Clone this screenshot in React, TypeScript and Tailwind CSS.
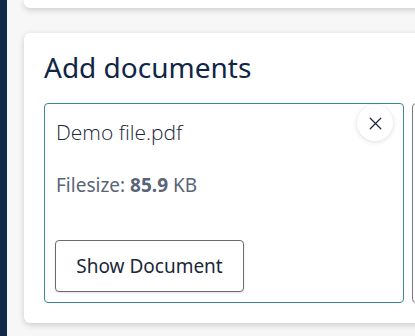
import { X } from 'lucide-react'

interface DocFile {
  name: string
  sizeKb: number
}

const files: DocFile[] = [{ name: 'Demo file.pdf', sizeKb: 85.9 }]

function DocumentCard({ file }: { file: DocFile }) {
  return (
    <div className="relative flex h-[200px] w-[360px] shrink-0 flex-col rounded-[4px] border border-[#3d8796] bg-white px-[10px] pt-[14px] pb-[10px]">
      <button className="absolute top-[1px] right-[10px] flex h-[36px] w-[36px] items-center justify-center rounded-full bg-white shadow-[0_1px_5px_rgba(0,0,0,0.14)]">
        <X size={21} strokeWidth={1.5} className="text-[#1d2a3b]" />
      </button>
      <p
        className="pl-[1px] text-[21px] leading-[28px] font-light text-[#1b2839]"
        style={{ fontFamily: '"Open Sans", "Noto Sans", sans-serif' }}
      >
        {file.name}
      </p>
      <p className="mt-[26px] pl-[1px] text-[19px] leading-[26px] text-[#5a6477]">
        Filesize: <span className="font-bold">{file.sizeKb}</span> KB
      </p>
      <div className="mt-auto">
        <button className="h-[52px] w-[189px] rounded-[4px] border border-[#6b6b6b] bg-white text-[19px] text-[#1b2839] shadow-[0_1px_2px_rgba(0,0,0,0.12)]">
          Show Document
        </button>
      </div>
    </div>
  )
}

export default function App() {
  return (
    <div
      className="flex h-[336px] w-[415px] overflow-hidden bg-[#f7f7f7]"
      style={{ fontFamily: '"Noto Sans", "Open Sans", sans-serif' }}
    >
      <div className="w-[7px] shrink-0 bg-[#11284a]" />
      <div className="flex-1 overflow-hidden pl-[17px]">
        {/* previous card, mostly scrolled out */}
        <div className="h-[8px] w-[420px] rounded-b-[6px] bg-white shadow-[0_2px_6px_rgba(0,0,0,0.18)]" />

        <div className="mt-[25px] w-[420px] rounded-[6px] bg-white px-[20px] pt-[16px] pb-[20px] shadow-[0_2px_6px_rgba(0,0,0,0.18)]">
          <h2 className="text-[28px] leading-[36px] text-[#0f2645]">Add documents</h2>
          <div className="mt-[18px] flex gap-[8px]">
            {files.map(f => (
              <DocumentCard key={f.name} file={f} />
            ))}
            {/* next card, off-screen */}
            <div className="h-[200px] w-[360px] shrink-0 rounded-[4px] border border-[#7a7a7a] bg-white" />
          </div>
        </div>
      </div>
    </div>
  )
}
